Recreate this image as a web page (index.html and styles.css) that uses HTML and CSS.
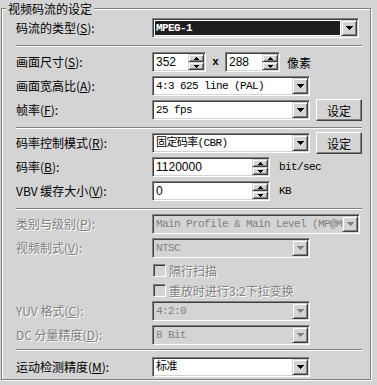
FILE: index.html
```html
<!DOCTYPE html>
<html lang="zh">
<head>
<meta charset="utf-8">
<title>视频码流的设定</title>
<link rel="stylesheet" href="styles.css">
</head>
<body>
<fieldset class="group">
  <legend>视频码流的设定</legend>

  <div class="row">
    <span class="lbl">码流的类型(<u>S</u>):</span>
    <div class="combo w207">
      <div class="field mono sel"><span class="focus">MPEG-1</span></div>
      <span class="ddbtn"><svg width="7" height="4" viewBox="0 0 7 4"><path d="M0 0h7v1h-1v1h-1v1h-1v1h-1v-1h-1v-1h-1v-1h-1z"/></svg></span>
    </div>
  </div>

  <hr class="sep s1">

  <div class="row">
    <span class="lbl">画面尺寸(<u>S</u>):</span>
    <div class="spin w54">
      <div class="field sans">352</div>
      <div class="spinbtns">
        <span class="sb"><svg width="5" height="3" viewBox="0 0 5 3"><path d="M2 0h1v1h1v1h1v1h-5v-1h1v-1h1z"/></svg></span>
        <span class="sb"><svg width="5" height="3" viewBox="0 0 5 3"><path d="M0 0h5v1h-1v1h-1v1h-1v-1h-1v-1h-1z"/></svg></span>
      </div>
    </div>
    <span class="times">x</span>
    <div class="spin w55">
      <div class="field sans">288</div>
      <div class="spinbtns">
        <span class="sb"><svg width="5" height="3" viewBox="0 0 5 3"><path d="M2 0h1v1h1v1h1v1h-5v-1h1v-1h1z"/></svg></span>
        <span class="sb"><svg width="5" height="3" viewBox="0 0 5 3"><path d="M0 0h5v1h-1v1h-1v1h-1v-1h-1v-1h-1z"/></svg></span>
      </div>
    </div>
    <span class="unit cjk">像素</span>
  </div>

  <div class="row gap4">
    <span class="lbl">画面宽高比(<u>A</u>):</span>
    <div class="combo w158">
      <div class="field mono">4:3 625 line (PAL)</div>
      <span class="ddbtn"><svg width="7" height="4" viewBox="0 0 7 4"><path d="M0 0h7v1h-1v1h-1v1h-1v1h-1v-1h-1v-1h-1v-1h-1z"/></svg></span>
    </div>
  </div>

  <div class="row gap4">
    <span class="lbl">帧率(<u>F</u>):</span>
    <div class="combo w158">
      <div class="field mono">25 fps</div>
      <span class="ddbtn"><svg width="7" height="4" viewBox="0 0 7 4"><path d="M0 0h7v1h-1v1h-1v1h-1v1h-1v-1h-1v-1h-1v-1h-1z"/></svg></span>
    </div>
    <button class="btn">设定</button>
  </div>

  <hr class="sep s2">

  <div class="row">
    <span class="lbl">码率控制模式(<u>R</u>):</span>
    <div class="combo w158">
      <div class="field mono">固定码率(CBR)</div>
      <span class="ddbtn"><svg width="7" height="4" viewBox="0 0 7 4"><path d="M0 0h7v1h-1v1h-1v1h-1v1h-1v-1h-1v-1h-1v-1h-1z"/></svg></span>
    </div>
    <button class="btn">设定</button>
  </div>

  <div class="row gap4">
    <span class="lbl">码率(<u>B</u>):</span>
    <div class="spin w118">
      <div class="field sans">1120000</div>
      <div class="spinbtns">
        <span class="sb"><svg width="5" height="3" viewBox="0 0 5 3"><path d="M2 0h1v1h1v1h1v1h-5v-1h1v-1h1z"/></svg></span>
        <span class="sb"><svg width="5" height="3" viewBox="0 0 5 3"><path d="M0 0h5v1h-1v1h-1v1h-1v-1h-1v-1h-1z"/></svg></span>
      </div>
    </div>
    <span class="unit mono">bit/sec</span>
  </div>

  <div class="row gap4">
    <span class="lbl">VBV 缓存大小(<u>V</u>):</span>
    <div class="spin w118">
      <div class="field sans">0</div>
      <div class="spinbtns">
        <span class="sb"><svg width="5" height="3" viewBox="0 0 5 3"><path d="M2 0h1v1h1v1h1v1h-5v-1h1v-1h1z"/></svg></span>
        <span class="sb"><svg width="5" height="3" viewBox="0 0 5 3"><path d="M0 0h5v1h-1v1h-1v1h-1v-1h-1v-1h-1z"/></svg></span>
      </div>
    </div>
    <span class="unit mono">KB</span>
  </div>

  <hr class="sep s3">

  <div class="row dis">
    <span class="lbl">类别与级别(<u>P</u>):</span>
    <div class="combo w208">
      <div class="field mono">Main Profile &amp; Main Level (MP@M</div>
      <span class="ddbtn"><svg width="7" height="4" viewBox="0 0 7 4"><path d="M0 0h7v1h-1v1h-1v1h-1v1h-1v-1h-1v-1h-1v-1h-1z"/></svg></span>
    </div>
  </div>

  <div class="row gap4 dis">
    <span class="lbl">视频制式(<u>V</u>):</span>
    <div class="combo w158">
      <div class="field mono">NTSC</div>
      <span class="ddbtn"><svg width="7" height="4" viewBox="0 0 7 4"><path d="M0 0h7v1h-1v1h-1v1h-1v1h-1v-1h-1v-1h-1v-1h-1z"/></svg></span>
    </div>
  </div>

  <div class="row chk gap2 dis">
    <span class="box"></span><span class="chklbl">隔行扫描</span>
  </div>
  <div class="row chk dis">
    <span class="box"></span><span class="chklbl">重放时进行3:2下拉变换</span>
  </div>

  <div class="row gap1 dis">
    <span class="lbl">YUV 格式(<u>C</u>):</span>
    <div class="combo w158">
      <div class="field mono">4:2:0</div>
      <span class="ddbtn"><svg width="7" height="4" viewBox="0 0 7 4"><path d="M0 0h7v1h-1v1h-1v1h-1v1h-1v-1h-1v-1h-1v-1h-1z"/></svg></span>
    </div>
  </div>

  <div class="row gap4 dis">
    <span class="lbl">DC 分量精度(<u>D</u>):</span>
    <div class="combo w158">
      <div class="field mono">8 Bit</div>
      <span class="ddbtn"><svg width="7" height="4" viewBox="0 0 7 4"><path d="M0 0h7v1h-1v1h-1v1h-1v1h-1v-1h-1v-1h-1v-1h-1z"/></svg></span>
    </div>
  </div>

  <hr class="sep s4">

  <div class="row">
    <span class="lbl">运动检测精度(<u>M</u>):</span>
    <div class="combo w158">
      <div class="field mono">标准</div>
      <span class="ddbtn"><svg width="7" height="4" viewBox="0 0 7 4"><path d="M0 0h7v1h-1v1h-1v1h-1v1h-1v-1h-1v-1h-1v-1h-1z"/></svg></span>
    </div>
  </div>
</fieldset>
</body>
</html>
```

FILE: styles.css
```css
html, body {
  margin: 0;
  padding: 0;
}
body {
  width: 377px;
  height: 385px;
  overflow: hidden;
  background: #d4d4d4;
  color: #000;
  font-family: "Noto Sans CJK SC", sans-serif;
  font-size: 12px;
}

.group {
  box-sizing: border-box;
  margin: 0 0 0 1px;
  width: 370px;
  height: 380px;
  padding: 2px 8px 0 14px;
  border: 1px solid #808080;
  box-shadow: inset 1px 1px #fff, 1px 1px #fff;
  min-width: 0;
}
.group legend {
  margin-left: -10px;
  padding: 2px 2px 0;
  line-height: 14px;
  background: #d4d4d4;
  position: relative;
}

.row {
  display: flex;
  align-items: center;
  height: 20px;
  white-space: nowrap;
}
.gap1 { margin-top: 1px; }
.gap2 { margin-top: 2px; }
.gap4 { margin-top: 4px; }

.lbl {
  flex: none;
  width: 136px;
  line-height: 20px;
}

.sep {
  height: 0;
  border: 0;
  border-top: 1px solid #808080;
  border-bottom: 1px solid #fff;
  margin: 7px 0 5px;
}
.s2 { margin: 7px 0 4px; }
.s3 { margin: 7px 0 4px; }
.s4 { margin: 4px 0 6px; }

.mono {
  font-family: "Liberation Mono", "Noto Sans CJK SC", monospace;
  font-size: 11px;
  letter-spacing: -0.6px;
}
.sans {
  font-family: "Liberation Sans", sans-serif;
  font-size: 12px;
}
.cjk {
  font-family: "Noto Sans CJK SC", sans-serif;
}

.combo, .spin {
  flex: none;
  box-sizing: border-box;
  height: 20px;
  display: flex;
  border: 1px solid;
  border-color: #808080 #fff #fff #808080;
  box-shadow: inset 1px 1px #404040, inset -1px -1px #d4d4d4;
  background: #fff;
  padding: 1px;
}
.w54 { width: 54px; }
.w55 { width: 55px; }
.w118 { width: 118px; }
.w158 { width: 158px; }
.w207 { width: 207px; }
.w208 { width: 208px; }

.field {
  flex: 1;
  min-width: 0;
  overflow: hidden;
  white-space: nowrap;
  line-height: 16px;
  padding-left: 2px;
}
.field.sel {
  padding: 1px;
}
.field.sel .focus {
  display: block;
  height: 14px;
  line-height: 14px;
  background: #1e1e1e;
  color: #fff;
  font-weight: bold;
  outline: 1px dotted #fff;
  outline-offset: 0;
  padding-left: 1px;
}

.ddbtn {
  flex: none;
  box-sizing: border-box;
  width: 16px;
  height: 16px;
  display: flex;
  align-items: center;
  justify-content: center;
  background: #d4d4d4;
  border: 1px solid;
  border-color: #d4d4d4 #404040 #404040 #d4d4d4;
  box-shadow: inset 1px 1px #fff, inset -1px -1px #808080;
}
.ddbtn svg { fill: #000; display: block; }

.spinbtns {
  flex: none;
  width: 16px;
  height: 16px;
  display: flex;
  flex-direction: column;
}
.sb {
  box-sizing: border-box;
  width: 16px;
  height: 8px;
  display: flex;
  align-items: center;
  justify-content: center;
  background: #d4d4d4;
  border: 1px solid;
  border-color: #d4d4d4 #404040 #404040 #d4d4d4;
  box-shadow: inset 1px 1px #fff, inset -1px -1px #808080;
}
.sb svg { fill: #000; display: block; }

.times {
  flex: none;
  width: 19px;
  text-align: center;
  font-family: "Liberation Mono", monospace;
  font-size: 11px;
  font-weight: bold;
}
.unit {
  margin-left: 9px;
}
.unit.cjk {
  margin-left: 7px;
  font-size: 12px;
}

.btn {
  flex: none;
  box-sizing: border-box;
  margin: 0 0 0 6px;
  width: 46px;
  height: 22px;
  padding: 0;
  font-family: "Noto Sans CJK SC", sans-serif;
  font-size: 12px;
  color: #000;
  background: #d4d4d4;
  border: 1px solid;
  border-color: #fff #404040 #404040 #fff;
  box-shadow: inset -1px -1px #808080;
}

.dis {
  color: #808080;
}
.dis .lbl, .dis .chklbl {
  text-shadow: 1px 1px #fff;
}
.dis .combo .field {
  background: #d4d4d4;
}
.dis .ddbtn svg { fill: #808080; }

.chk .box {
  flex: none;
  box-sizing: border-box;
  margin-left: 137px;
  width: 13px;
  height: 13px;
  border: 1px solid;
  border-color: #808080 #fff #fff #808080;
  box-shadow: inset 1px 1px #404040, inset -1px -1px #d4d4d4;
  background: #d4d4d4;
}
.chklbl {
  margin-left: 3px;
}
```
